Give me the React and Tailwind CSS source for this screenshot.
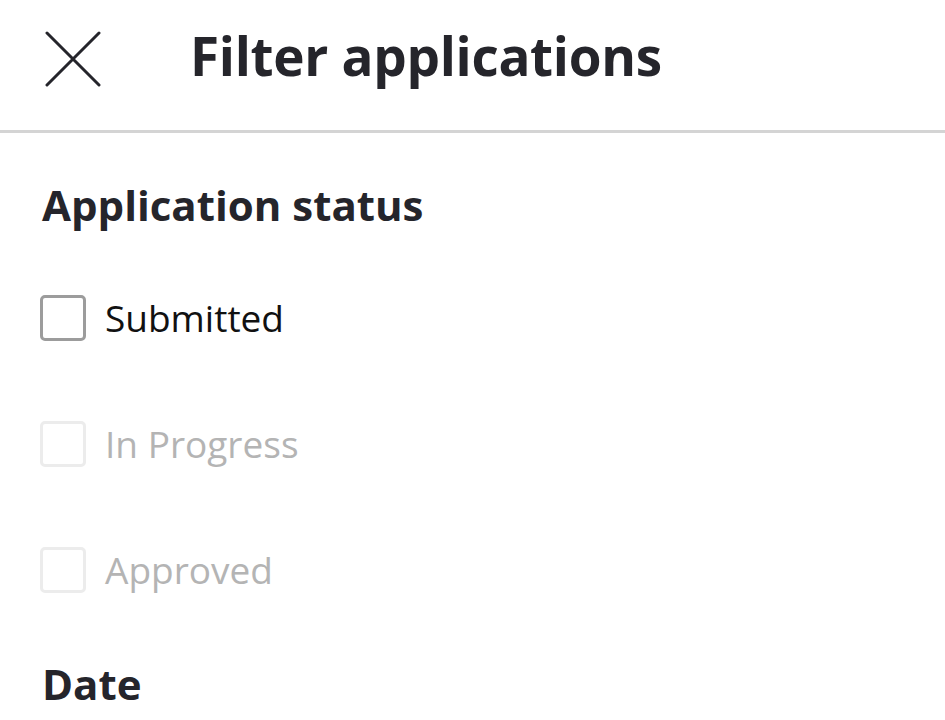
import React, { useState } from 'react';

const statuses = [
  { label: 'Submitted', disabled: false },
  { label: 'In Progress', disabled: true },
  { label: 'Approved', disabled: true },
];

export default function App() {
  const [checked, setChecked] = useState({});

  return (
    <div className="w-[945px] h-[720px] overflow-hidden bg-white text-[#25252b]" style={{ fontFamily: '"Open Sans", sans-serif' }}>
      {/* header */}
      <header className="flex items-center h-[133px] pl-[45px] border-b-[3px] border-[#d4d4d4]">
        <button className="w-[56px] h-[56px] shrink-0 -mt-[13px]">
          <svg viewBox="0 0 56 56" className="w-[56px] h-[56px]" fill="none" stroke="#25252b" strokeWidth="3" strokeLinecap="round">
            <path d="M2 2 L54 54 M54 2 L2 54" />
          </svg>
        </button>
        <h1 className="ml-[89px] text-[53px] font-bold leading-none tracking-[-0.3px] -mt-[19px]">Filter applications</h1>
      </header>

      <section className="px-[40px] pt-[51px]">
        <h2 className="ml-[2px] text-[42px] font-bold leading-none">Application status</h2>

        <div className="mt-[69px] flex flex-col gap-[80px]">
          {statuses.map((s) => (
            <label key={s.label} className={`flex items-center gap-[19px] h-[46px] ${s.disabled ? 'text-[#b4b4b4]' : 'text-[#111]'}`}>
              <input
                type="checkbox"
                disabled={s.disabled}
                checked={!!checked[s.label]}
                onChange={() => setChecked({ ...checked, [s.label]: !checked[s.label] })}
                className={`appearance-none w-[46px] h-[46px] rounded-[5px] border-[3px] bg-white ${s.disabled ? 'border-[#ececec]' : 'border-[#9c9c9c]'}`}
              />
              <span className="text-[37px] leading-none -mt-[2px]">{s.label}</span>
            </label>
          ))}
        </div>

        <h2 className="ml-[2px] mt-[70px] text-[42px] font-bold leading-none">Date</h2>
      </section>
    </div>
  );
}
